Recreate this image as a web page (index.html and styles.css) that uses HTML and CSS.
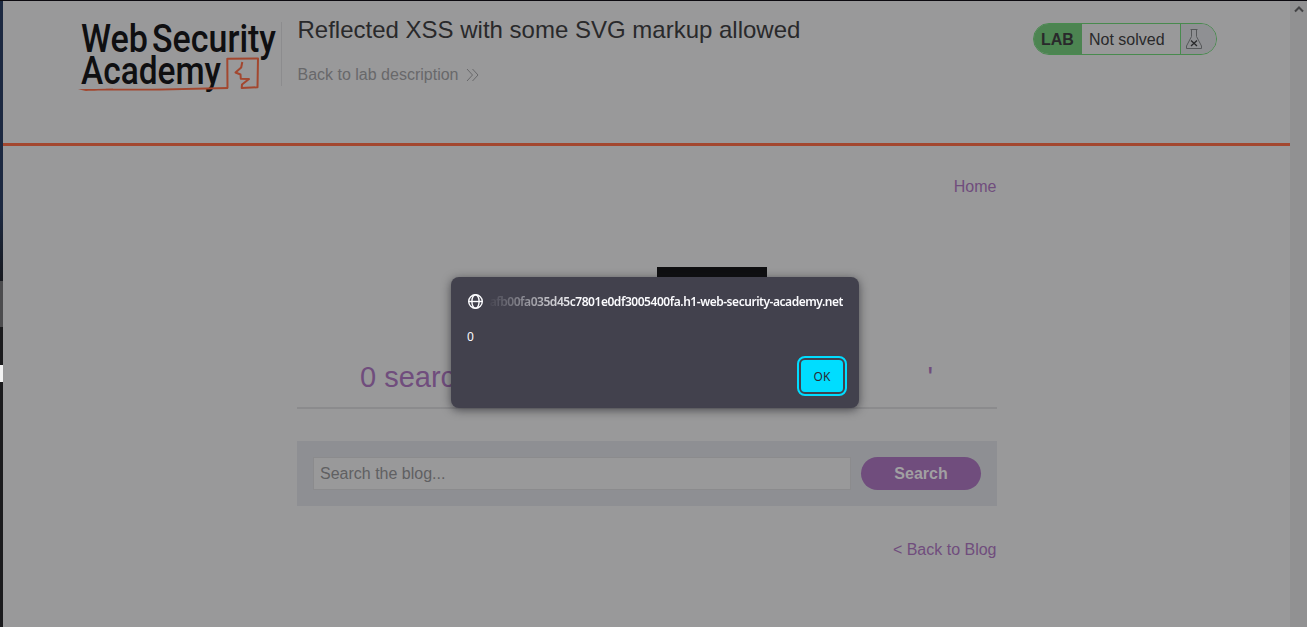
FILE: index.html
```html
<!DOCTYPE html>
<html lang="en">
<head>
<meta charset="utf-8">
<title>Reflected XSS with some SVG markup allowed</title>
<link rel="stylesheet" href="styles.css">
</head>
<body>
<div class="window">
  <div class="edge"><div class="edge-navy"></div><div class="edge-gray"></div><div class="edge-dark"></div><div class="edge-white"></div></div>
  <div class="page">
    <header class="lab-header">
      <svg class="logo" width="203" height="78" viewBox="78 18 203 78">
        <g class="logo-text">
          <text x="81" y="51.5" textLength="67" lengthAdjust="spacingAndGlyphs">Web</text>
          <text x="152" y="51.5" textLength="124" lengthAdjust="spacingAndGlyphs">Security</text>
          <text x="81" y="84" textLength="140" lengthAdjust="spacingAndGlyphs">Academy</text>
        </g>
        <g fill="none" stroke="#a3472f" stroke-width="2" stroke-linejoin="round">
          <path d="M227.500 88.200L227.300 58.800L258 58.500L257.500 87.300L241.700 88L242 84.500L249 79L240.800 78.800L240.500 74.500L235.500 72.500L241.200 67.500L242.300 62"/>
        </g>
        <path d="M78 89.300C100 88.700 130 89.200 165 88.600L228 87V88.900L160 90.500C130 90.800 100 90.200 86 91Z" fill="#a3472f"/>
      </svg>
      <div class="title-block">
        <h2>Reflected XSS with some SVG markup allowed</h2>
        <a class="back-lab"><span>Back to lab description</span>
          <svg width="13" height="14" viewBox="0 0 13 14" fill="none" stroke="#68686a"><path d="M1 1l5.500 6L1 13M6.500 1L12 7l-5.500 6"/></svg>
        </a>
      </div>
      <div class="badge">
        <span class="badge-lab">LAB</span>
        <span class="badge-state">Not solved</span>
        <span class="badge-icon"><svg width="18" height="22" viewBox="0 0 18 22" fill="none" stroke="#56585a"><path d="M5.500 1.500h7M6.500 1.500v7L1.500 18v2.500h15V18l-5-9.500v-7"/><path d="M6 12.500l6 5.500M12 12.500l-6 5.500" stroke="#29292b" stroke-width="1.300"/></svg></span>
      </div>
    </header>
    <main class="content">
      <nav><a>Home</a></nav>
      <h1><span>0 search results for '</span><span>'</span></h1>
      <section class="search">
        <input type="text" placeholder="Search the blog...">
        <button class="search-btn">Search</button>
      </section>
      <a class="back-blog">&lt; Back to Blog</a>
    </main>
  </div>
  <div class="scrollbar"><svg width="10" height="8" viewBox="0 0 10 8" fill="none" stroke="#434345" stroke-width="2"><path d="M1 6.500l4-4 4 4"/></svg></div>
</div>
<div class="redaction"></div>
<div class="dialog">
  <div class="dialog-head">
    <svg width="16" height="16" viewBox="0 0 16 16" fill="none" stroke="#fbfbfe" stroke-width="1.400"><circle cx="8.500" cy="7.500" r="6.800"/><ellipse cx="8.500" cy="7.500" rx="3.600" ry="6.800"/><path d="M1.500 7.500h14"/></svg>
    <div class="origin"><span>afb00fa035d45c7801e0df3005400fa.h1-web-security-academy.net</span></div>
  </div>
  <div class="message">0</div>
  <button class="ok">OK</button>
</div>
</body>
</html>
```
FILE: styles.css
```css
* { box-sizing: border-box; }
body { margin: 0; background: #99999a; font-family: "Liberation Sans", Arial, sans-serif; font-size: 16px; color: #29292b; overflow: hidden; }
h1, h2 { margin: 0; font-weight: 400; }
svg { display: block; flex: none; }

.window { display: flex; height: 627px; border-top: 1px solid #0c0a10; }
.edge { width: 3px; display: flex; flex-direction: column; background: #1b1b1d; }
.edge-navy { height: 280px; background: linear-gradient(#1c2941 0, #1c2941 75%, #17191f 100%); }
.edge-gray { height: 46px; background: #4c4c4e; }
.edge-dark { height: 38px; }
.edge-white { height: 17px; background: #f3f3f3; }
.page { flex: 1; }
.scrollbar { width: 17px; padding: 4px 0 0 4px; background: #919192; }

.lab-header { display: flex; align-items: flex-start; height: 145px; padding: 17px 73px 0 75px; border-bottom: 3px solid #a3472f; }
.logo { overflow: visible; }
.logo-text { font: 500 38px Roboto, sans-serif; fill: #0f0f11; }
.title-block { flex: 1; height: 64px; margin-top: 4px; padding-left: 15.5px; border-left: 1px solid #8c8c8e; }
.title-block h2 { margin-top: -6px; font-size: 24px; line-height: 28px; white-space: nowrap; }
.back-lab { display: flex; align-items: center; gap: 8px; margin-top: 22px; line-height: 18px; color: #68686a; }
.back-lab svg { margin-top: -1px; }

.badge { display: flex; width: 184px; height: 32px; margin-top: 5px; overflow: hidden; border: 1px solid #488a4e; border-radius: 16px; line-height: 31px; }
.badge-lab { width: 48px; padding-left: 7px; background: #4c8451; font-weight: 700; }
.badge-state { width: 99px; padding-left: 7px; border-right: 1px solid #488a4e; }
.badge-icon { flex: 1; padding: 4px 0 0 4px; background: #8f9093; }

.content { width: 700px; margin-left: 294px; display: flex; flex-direction: column; color: #704d7d; }
nav { margin-top: 32px; padding-right: .5px; text-align: right; line-height: 18px; }
h1 { display: flex; justify-content: space-between; margin-top: 164px; height: 49px; padding: 0 64px 0 63px; border-bottom: 2px solid #8b8b8d; font-size: 29px; line-height: 34px; }
.search { display: flex; gap: 10px; height: 65px; margin-top: 32px; padding: 16px; background: #8e8f93; }
.search input { flex: 1; height: 33px; padding: 0 6px; border: 1px solid #8b8b8d; background: #99999a; font: inherit; outline: 0; }
.search input::placeholder { color: #606062; opacity: 1; }
.search-btn { width: 120px; height: 33px; padding: 0; border: 0; border-radius: 17px; background: #704d7d; color: #a1a0a2; font: 700 16px "Liberation Sans", Arial, sans-serif; }
.back-blog { margin-top: 34px; padding-right: .5px; text-align: right; line-height: 19px; }

.redaction { position: absolute; left: 657px; top: 267px; width: 110px; height: 20px; background: #0f0f11; }
.dialog { position: absolute; left: 451px; top: 277px; width: 408px; height: 131px; padding: 16px 16px 13px 16px; display: flex; flex-direction: column; border-radius: 8px; background: #42414d; box-shadow: 0 2px 10px rgba(20, 20, 26, .6); color: #fbfbfe; font: 12px/17px "Noto Sans", sans-serif; }
.dialog-head { display: flex; align-items: center; gap: 4px; height: 17px; }
.origin { flex: 1; display: flex; justify-content: flex-end; overflow: hidden; white-space: nowrap; font-weight: 600; letter-spacing: -.46px; -webkit-mask-image: linear-gradient(to right, transparent, #000 90px); mask-image: linear-gradient(to right, transparent, #000 90px); }
.message { margin-top: 18px; }
.ok { align-self: flex-end; margin-top: 15px; width: 42px; height: 32px; padding: 0; border: 0; border-radius: 4px; background: #00ddff; color: #2b2a33; font: 12px "Noto Sans", sans-serif; outline: 2px solid #00ddff; outline-offset: 2px; }
```
